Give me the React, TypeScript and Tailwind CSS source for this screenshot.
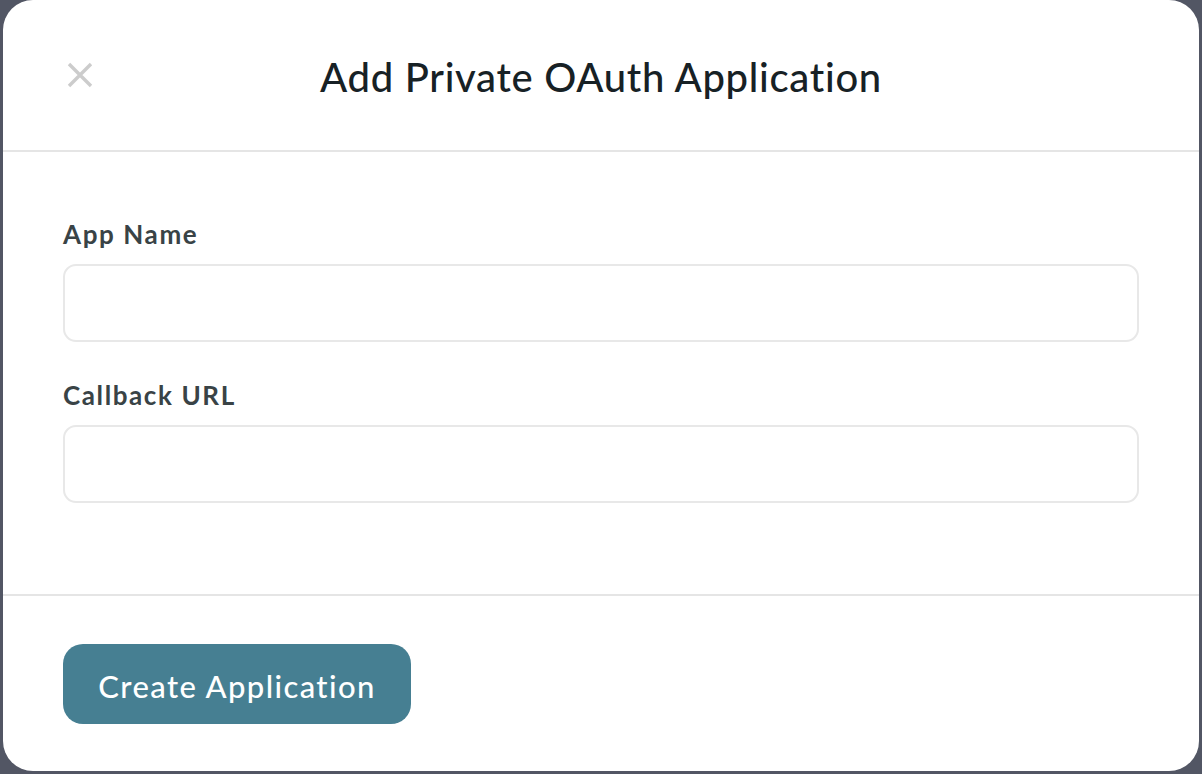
import React from "react";

export default function App() {
  return (
    <div
      className="w-[1202px] h-[774px] bg-[#525664] pl-[3px] pr-[3px] pb-[3px] overflow-hidden"
      style={{ fontFamily: "Lato, 'Open Sans', sans-serif" }}
    >
      <div className="w-full h-full bg-white rounded-[30px] flex flex-col overflow-hidden">
        <div className="relative h-[152px] flex items-center justify-center border-b-2 border-[#e5e5e5] shrink-0">
          <button className="absolute left-[62px] top-[60px] w-[30px] h-[30px] flex items-center justify-center">
            <svg width="28" height="28" viewBox="0 0 28 28">
              <path d="M3 3 L25 25 M25 3 L3 25" stroke="#cccccc" strokeWidth="3.4" />
            </svg>
          </button>
          <h1 className="text-[40px] font-medium text-[#172125] leading-none pt-[3px] tracking-[0.7px]">
            Add Private OAuth Application
          </h1>
        </div>
        <div className="flex-1 px-[60px] pt-[67px] flex flex-col">
          <label className="text-[26px] font-bold text-[#394346] leading-[30px] tracking-[1.6px]">App Name</label>
          <input className="mt-[15px] h-[78px] w-full rounded-[13px] border-2 border-[#e8e8e8] outline-none" />
          <label className="mt-[38px] text-[26px] font-bold text-[#394346] leading-[30px] tracking-[1.6px]">Callback URL</label>
          <input className="mt-[15px] h-[78px] w-full rounded-[13px] border-2 border-[#e8e8e8] outline-none" />
        </div>
        <div className="h-[177px] shrink-0 border-t-2 border-[#e5e5e5] px-[60px] pt-[48px]">
          <button className="h-[80px] w-[348px] rounded-[20px] bg-[#467f92] text-white text-[31px] font-medium tracking-[1.4px] pt-[4px]">
            Create Application
          </button>
        </div>
      </div>
    </div>
  );
}
